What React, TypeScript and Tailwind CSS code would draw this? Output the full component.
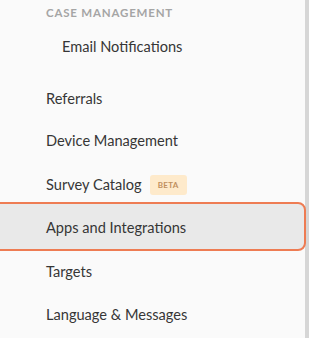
const items = [
  { name: 'Referrals', extra: 'mt-[10px] h-[42px]' },
  { name: 'Device Management', extra: 'h-[42px]' },
];

export default function App() {
  return (
    <div className="flex h-[338px] w-full overflow-hidden bg-white font-['Lato',sans-serif]">
      <nav className="flex w-[305px] shrink-0 flex-col bg-[#fafafa] text-[14.6px] text-[#363636]">
        <div className="flex h-[26px] items-center pl-[46px] text-[11.5px] font-bold tracking-[0.07em] text-[#a5a5a5]">
          CASE MANAGEMENT
        </div>
        <div className="flex h-[42px] items-center pl-[62px]">Email Notifications</div>

        {items.map((item) => (
          <div key={item.name} className={`flex items-center pl-[46px] ${item.extra}`}>
            {item.name}
          </div>
        ))}

        <div className="flex h-[40px] items-center pl-[46px] pt-[6px]">
          Survey Catalog
          <span className="ml-2 flex h-[20px] w-[37px] items-center justify-center rounded-[3px] bg-[#feeacb] text-[8px] font-bold tracking-[0.04em] text-[#c08f5e]">
            BETA
          </span>
        </div>

        <div className="relative z-10 -ml-[10px] -mr-[1px] flex h-[49px] items-center rounded-lg border-2 border-[#ee7c53] bg-[#e9e9e9] pl-[54px] pt-[3px]">
          Apps and Integrations
        </div>

        <div className="flex h-[42px] items-center pl-[46px]">Targets</div>
        <div className="flex h-[44px] items-center pl-[46px]">Language &amp; Messages</div>
      </nav>
      <div className="w-[4px] shrink-0 bg-[#d6d6d6]" />
      <div className="flex-1 bg-white" />
    </div>
  );
}
